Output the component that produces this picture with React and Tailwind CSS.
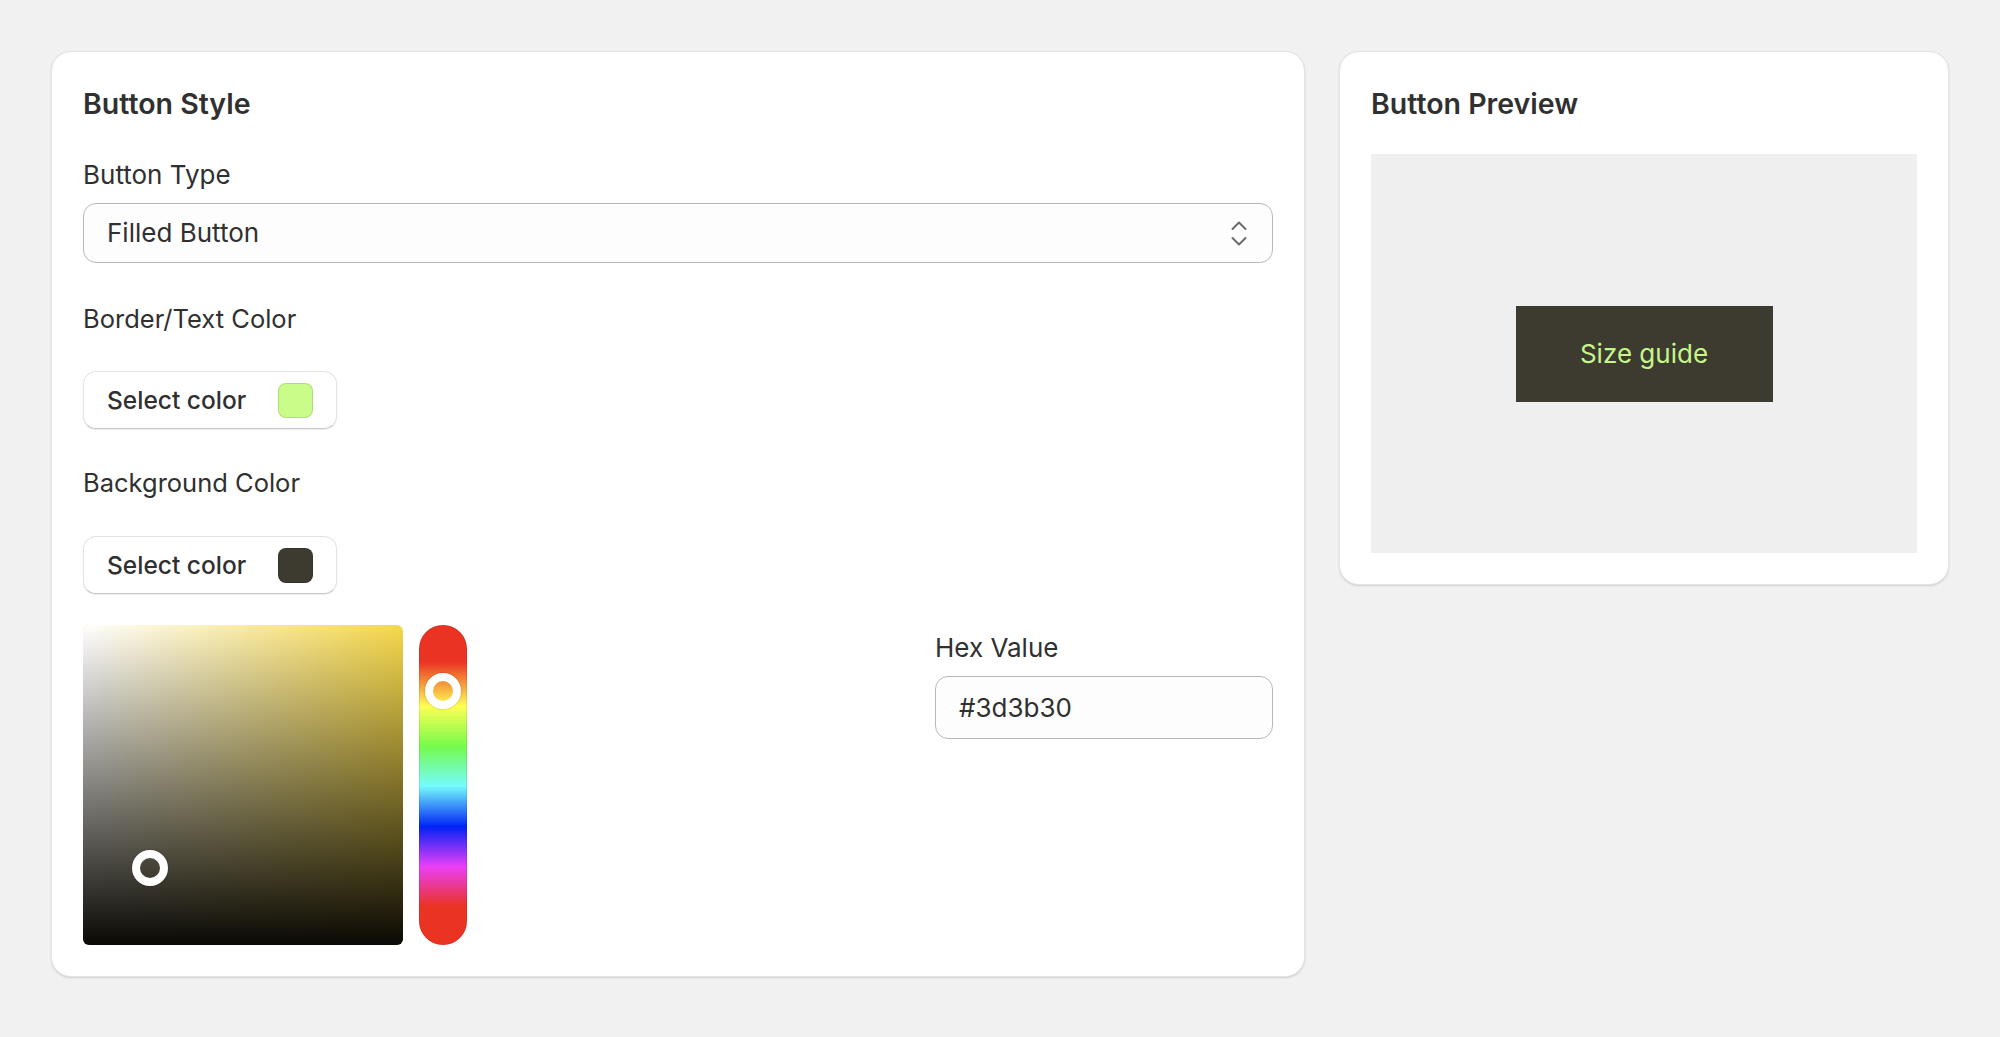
import React from "react";

function SelectColorButton({ color }) {
  return (
    <button className="flex h-[58px] w-[254px] items-center justify-between rounded-[13px] border border-[#e3e3e3] border-b-[#c9c9c9] bg-white pl-[23px] pr-[23px] shadow-[0_1px_1px_rgba(0,0,0,0.08)]">
      <span className="text-[24.5px] font-medium leading-[32px] text-[#303030]">Select color</span>
      <span
        className="h-[35px] w-[35px] rounded-[8px] shadow-[inset_0_0_0_1px_rgba(0,0,0,0.12)]"
        style={{ backgroundColor: color }}
      />
    </button>
  );
}

export default function App() {
  return (
    <div
      className="flex min-h-screen items-start gap-[34px] bg-[#f1f1f1] pl-[51px] pt-[51px] text-[#303030]"
      style={{ fontFamily: "Inter, 'Noto Sans', sans-serif" }}
    >
      {/* Left card */}
      <div className="flex h-[926px] w-[1254px] flex-col rounded-[20px] border border-[#e4e4e4] bg-white p-[31px] shadow-[0_1px_2px_rgba(0,0,0,0.14)]">
        <h2 className="text-[28.5px] font-semibold leading-[42px]">Button Style</h2>

        <label className="mt-[34px] text-[26px] leading-[32px]">Button Type</label>
        <div className="mt-[12px] flex h-[64px] items-center justify-between rounded-[13px] border border-[#b9b9b9] bg-[#fdfdfd] pl-[23px] pr-[25px]">
          <span className="text-[26px] leading-[32px]">Filled Button</span>
          <svg width="16" height="25" viewBox="0 0 16 25" fill="none" stroke="#6b6b6b" strokeWidth="2" strokeLinecap="round" strokeLinejoin="round">
            <path d="M1.5 8 L8 1.5 L14.5 8" />
            <path d="M1.5 17 L8 23.5 L14.5 17" />
          </svg>
        </div>

        <label className="mt-[40px] text-[25.5px] leading-[32px]">Border/Text Color</label>
        <div className="mt-[36px]">
          <SelectColorButton color="#c9fc89" />
        </div>

        <label className="mt-[38px] text-[25.5px] leading-[32px]">Background Color</label>
        <div className="mt-[37px]">
          <SelectColorButton color="#3d3b30" />
        </div>

        <div className="mt-[31px] flex items-start justify-between">
          <div className="flex gap-[16px]">
            {/* Saturation / brightness square */}
            <div className="relative h-[320px] w-[320px] overflow-hidden rounded-[6px] bg-[#f6d84b]">
              <div className="absolute inset-0 bg-[linear-gradient(to_right,#ffffff,rgba(255,255,255,0))]" />
              <div className="absolute inset-0 bg-[linear-gradient(to_top,#0a0904,rgba(0,0,0,0))]" />
              <div className="absolute left-[49px] top-[225px] h-[36px] w-[36px] rounded-full border-[8px] border-white shadow-[0_0_2px_rgba(0,0,0,0.3)]" />
            </div>
            {/* Hue slider */}
            <div className="relative h-[320px] w-[48px] rounded-full bg-[linear-gradient(to_bottom,#ea3323_11.5%,#fffe54_25.3%,#75fb4c_38%,#75fbfd_50.3%,#0023f5_63%,#ea3ff7_75.5%,#ea3323_88%)] shadow-[inset_0_0_0_1px_rgba(0,0,0,0.08)]">
              <div className="absolute left-[6px] top-[48px] h-[36px] w-[36px] rounded-full border-[8px] border-white shadow-[0_0_2px_rgba(0,0,0,0.3)]" />
            </div>
          </div>

          <div className="flex w-[338px] flex-col pt-[7px]">
            <label className="text-[26px] leading-[32px]">Hex Value</label>
            <div className="mt-[12px] flex h-[63px] items-center rounded-[13px] border border-[#b9b9b9] bg-[#fdfdfd] px-[23px]">
              <span className="text-[26px] leading-[32px]">#3d3b30</span>
            </div>
          </div>
        </div>
      </div>

      {/* Right card */}
      <div className="flex h-[534px] w-[610px] flex-col rounded-[20px] border border-[#e4e4e4] bg-white p-[31px] shadow-[0_1px_2px_rgba(0,0,0,0.14)]">
        <h2 className="text-[28.5px] font-semibold leading-[42px]">Button Preview</h2>
        <div className="mt-[29px] flex h-[400px] items-center justify-center bg-[#efefef]">
          <div className="flex h-[96px] w-[257px] items-center justify-center bg-[#3d3b30]">
            <span className="text-[26px] leading-[32px] text-[#c6f68a]">Size guide</span>
          </div>
        </div>
      </div>
    </div>
  );
}
